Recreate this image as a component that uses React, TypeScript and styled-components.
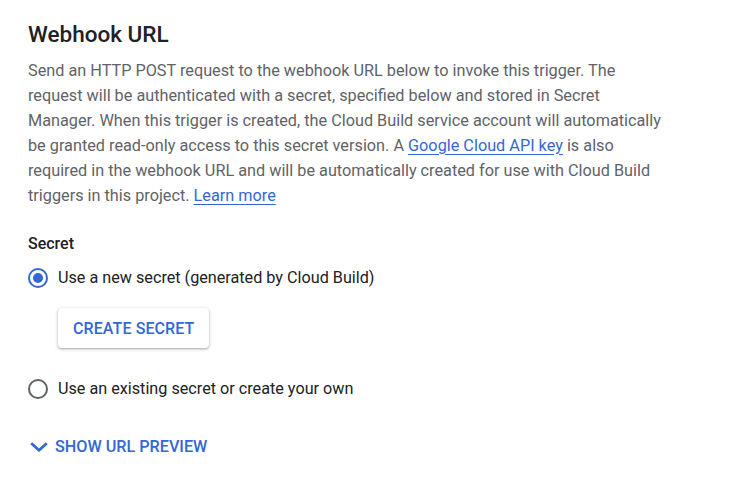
import React from "react";
import styled, { createGlobalStyle } from "styled-components";

const Global = createGlobalStyle`
  html, body { margin: 0; padding: 0; background: #fff; }
  body { font-family: Roboto, "Noto Sans", sans-serif; -webkit-font-smoothing: antialiased; }
`;

const Page = styled.div`
  padding: 18px 28px 0 28px;
  width: 640px;
`;

const Title = styled.h2`
  margin: 0;
  font-size: 22.5px;
  font-weight: 500;
  line-height: 32px;
  color: #202124;
`;

const Desc = styled.p`
  margin: 9px 0 0 0;
  font-size: 16.25px;
  line-height: 24.9px;
  color: #5f6368;
`;

const Link = styled.a`
  color: #3367d6;
  text-decoration: underline;
  text-underline-offset: 3px;
`;

const Label = styled.div`
  margin-top: 24px;
  font-size: 16px;
  font-weight: 500;
  line-height: 24px;
  color: #202124;
`;

const RadioRow = styled.label<{ $top: number }>`
  display: flex;
  align-items: center;
  gap: 10px;
  margin-top: ${(p) => p.$top}px;
  font-size: 16.2px;
  line-height: 24px;
  color: #202124;
  cursor: pointer;
`;

const RadioCircle = styled.span<{ $checked?: boolean }>`
  box-sizing: border-box;
  width: 20px;
  height: 20px;
  border-radius: 50%;
  border: 2px solid ${(p) => (p.$checked ? "#3367d6" : "#5f6368")};
  display: flex;
  align-items: center;
  justify-content: center;
  &::after {
    content: "";
    width: 10px;
    height: 10px;
    border-radius: 50%;
    background: ${(p) => (p.$checked ? "#3367d6" : "transparent")};
  }
`;

const Indent = styled.div`
  padding-left: 30px;
  margin-top: 18px;
`;

const RaisedButton = styled.button`
  height: 40px;
  padding: 0 15px;
  border: none;
  border-radius: 4px;
  background: #fff;
  color: #3367d6;
  font-family: Roboto, sans-serif;
  font-size: 16px;
  font-weight: 500;
  letter-spacing: 0.1px;
  text-transform: uppercase;
  box-shadow: 0 1px 2px rgba(60, 64, 67, 0.3), 0 1px 3px 1px rgba(60, 64, 67, 0.15);
  cursor: pointer;
`;

const TextButton = styled.button`
  display: flex;
  align-items: center;
  gap: 7px;
  margin-top: 36px;
  padding: 0 0 0 2px;
  border: none;
  background: none;
  color: #3367d6;
  font-family: Roboto, sans-serif;
  font-size: 16.2px;
  font-weight: 500;
  text-transform: uppercase;
  cursor: pointer;
`;

export default function App() {
  return (
    <>
      <Global />
      <Page>
        <Title>Webhook URL</Title>
        <Desc>
          Send an HTTP POST request to the webhook URL below to invoke this trigger. The
          request will be authenticated with a secret, specified below and stored in Secret
          Manager. When this trigger is created, the Cloud Build service account will
          automatically be granted read-only access to this secret version. A{" "}
          <Link href="#">Google Cloud API key</Link> is also required in the webhook URL and
          will be automatically created for use with Cloud Build triggers in this project.{" "}
          <Link href="#">Learn more</Link>
        </Desc>
        <Label>Secret</Label>
        <RadioRow $top={10}>
          <RadioCircle $checked />
          Use a new secret (generated by Cloud Build)
        </RadioRow>
        <Indent>
          <RaisedButton>Create secret</RaisedButton>
        </Indent>
        <RadioRow $top={29}>
          <RadioCircle />
          Use an existing secret or create your own
        </RadioRow>
        <TextButton>
          <svg width="18" height="10" viewBox="0 0 18 10">
            <path d="M1.2 1.2 L9 8.2 L16.8 1.2" fill="none" stroke="#3367d6" strokeWidth="2.8" />
          </svg>
          Show URL preview
        </TextButton>
      </Page>
    </>
  );
}
